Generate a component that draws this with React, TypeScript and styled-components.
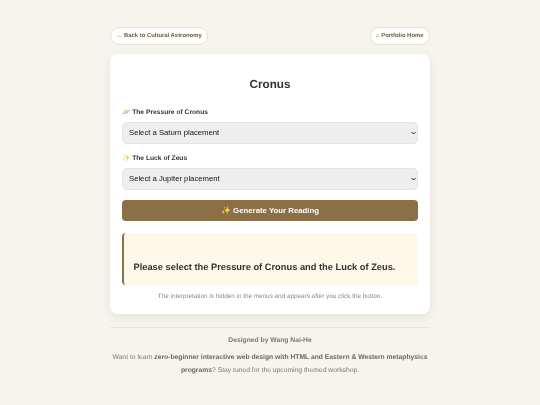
import React, { useState } from 'react';
import styled, { createGlobalStyle } from 'styled-components';

const GlobalStyle = createGlobalStyle`
  html, body {
    margin: 0;
    padding: 0;
    background: #f7f4ee;
    font-family: "Liberation Sans", Arial, sans-serif;
    text-rendering: geometricPrecision;
  }
  * { box-sizing: border-box; }
`;

const Page = styled.div`
  width: 320px;
  margin: 0 auto;
  padding: 27px 0 0;
  will-change: transform;
`;

const TopNav = styled.nav`
  display: flex;
  justify-content: space-between;
  margin-bottom: 9px;
`;

const NavLink = styled.a`
  display: flex;
  align-items: center;
  height: 18px;
  padding: 0 5.5px;
  background: #fff;
  border: 1px solid #e6dfd2;
  border-radius: 9px;
  color: #6f5a3c;
  font-size: 5.9px;
  font-weight: 700;
  white-space: nowrap;
`;

const Card = styled.main`
  height: 260px;
  padding: 0 12px;
  background: #fff;
  border-radius: 8px;
  box-shadow: 0 3px 12px rgba(0, 0, 0, 0.08);
`;

const Title = styled.h1`
  margin: 0;
  padding-top: 23px;
  height: 50px;
  color: #333;
  font-size: 11.7px;
  line-height: 16px;
  font-weight: 700;
  text-align: center;
`;

const Field = styled.div`
  display: flex;
  flex-direction: column;
  margin-bottom: 6px;
`;

const Label = styled.label`
  height: 18px;
  padding-top: 5px;
  color: #333;
  font-size: 6.7px;
  line-height: 8px;
  font-weight: 700;
`;

const SelectWrap = styled.div`
  position: relative;
  height: 22px;
`;

const Select = styled.select`
  display: block;
  width: 100%;
  height: 22px;
  padding: 0 6px 1px;
  appearance: none;
  background-color: #eeeeee;
  border: 1px solid #e4e4e4;
  border-radius: 5px;
  color: #111;
  font-family: "Liberation Sans", Arial, sans-serif;
  font-size: 7.7px;
`;

const Chevron = styled.svg`
  position: absolute;
  top: 9px;
  right: 2px;
  width: 5px;
  height: 4px;
  pointer-events: none;
`;

const GenerateButton = styled.button`
  display: block;
  width: 100%;
  height: 21px;
  margin-top: 10px;
  padding: 0;
  background: #8b6f47;
  border: none;
  border-radius: 4px;
  color: #fff;
  font-family: "Liberation Sans", Arial, sans-serif;
  font-size: 7.8px;
  font-weight: 700;
`;

const Result = styled.section`
  display: flex;
  align-items: flex-end;
  height: 52px;
  margin-top: 12px;
  padding: 0 9.5px 11px;
  background: #fff8e9;
  border-left: 2px solid #8b6f47;
  border-radius: 4px;
  color: #333;
  font-size: 9.3px;
  line-height: 14px;
  font-weight: 700;
  white-space: nowrap;
`;

const Note = styled.p`
  margin: 8px 0 0;
  color: #888;
  font-size: 6.35px;
  line-height: 8px;
  text-align: center;
`;

const Footer = styled.footer`
  margin-top: 13px;
  padding-top: 8px;
  border-top: 1px solid #e8e4dc;
  color: #777;
  font-size: 6.75px;
  text-align: center;
`;

const Credit = styled.div`
  margin-bottom: 6px;
  line-height: 10px;
  font-weight: 700;
`;

const Promo = styled.p`
  margin: 0;
  line-height: 12.5px;
  strong { color: #666; }
`;

const SelectArrow: React.FC = () => (
  <Chevron viewBox="0 0 10 8">
    <path d="M1 2l4 4 4-4" fill="none" stroke="#222" strokeWidth="2" />
  </Chevron>
);

const App: React.FC = () => {
  const [saturn, setSaturn] = useState('');
  const [jupiter, setJupiter] = useState('');

  return (
    <Page>
      <GlobalStyle />
      <TopNav>
        <NavLink>← Back to Cultural Astronomy</NavLink>
        <NavLink>⌂ Portfolio Home</NavLink>
      </TopNav>
      <Card>
        <Title>Cronus</Title>
        <Field>
          <Label htmlFor="saturn">🪐 The Pressure of Cronus</Label>
          <SelectWrap>
            <Select id="saturn" value={saturn} onChange={e => setSaturn(e.target.value)}>
              <option value="">Select a Saturn placement</option>
            </Select>
            <SelectArrow />
          </SelectWrap>
        </Field>
        <Field>
          <Label htmlFor="jupiter">✨ The Luck of Zeus</Label>
          <SelectWrap>
            <Select id="jupiter" value={jupiter} onChange={e => setJupiter(e.target.value)}>
              <option value="">Select a Jupiter placement</option>
            </Select>
            <SelectArrow />
          </SelectWrap>
        </Field>
        <GenerateButton type="button">✨ Generate Your Reading</GenerateButton>
        <Result>Please select the Pressure of Cronus and the Luck of Zeus.</Result>
        <Note>The interpretation is hidden in the menus and appears after you click the button.</Note>
      </Card>
      <Footer>
        <Credit>Designed by Wang Nai-He</Credit>
        <Promo>
          Want to learn <strong>zero-beginner interactive web design with HTML and Eastern &amp; Western metaphysics programs</strong>? Stay tuned for the upcoming themed workshop.
        </Promo>
      </Footer>
    </Page>
  );
};

export default App;
